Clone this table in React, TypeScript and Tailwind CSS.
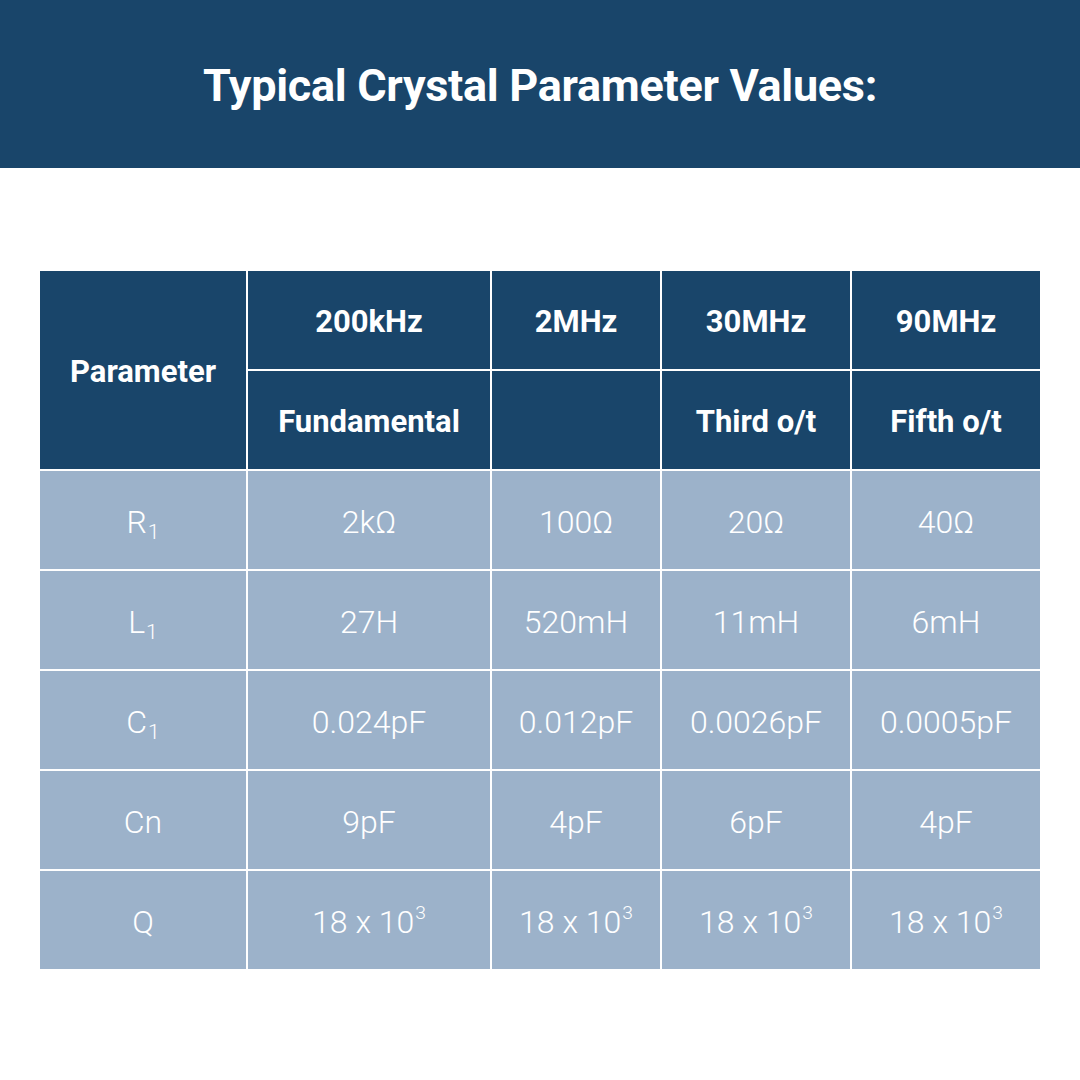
import React from 'react';

const freqs = ['200kHz', '2MHz', '30MHz', '90MHz'];
const modes = ['Fundamental', '', 'Third o/t', 'Fifth o/t'];

type Row = { label: React.ReactNode; values: React.ReactNode[] };

const Sub = ({ base, sub }: { base: string; sub: string }) => (
  <span>
    {base}
    <span className="relative top-[0.3em] text-[0.66em] ml-[1px]">{sub}</span>
  </span>
);

const Pow = () => (
  <span>
    18 x 10<span className="relative top-[-0.75em] text-[0.6em] ml-[1px]">3</span>
  </span>
);

const rows: Row[] = [
  { label: <Sub base="R" sub="1" />, values: ['2kΩ', '100Ω', '20Ω', '40Ω'] },
  { label: <Sub base="L" sub="1" />, values: ['27H', '520mH', '11mH', '6mH'] },
  { label: <Sub base="C" sub="1" />, values: ['0.024pF', '0.012pF', '0.0026pF', '0.0005pF'] },
  { label: 'Cn', values: ['9pF', '4pF', '6pF', '4pF'] },
  { label: 'Q', values: [<Pow />, <Pow />, <Pow />, <Pow />] },
];

export default function App() {
  return (
    <div className="w-[1080px] h-[1080px] bg-white font-['Roboto',sans-serif] text-white">
      {/* Title bar */}
      <div className="h-[168px] bg-[#19456a] flex items-center justify-center">
        <h1 className="text-[45px] font-bold tracking-[-0.3px] pt-1">Typical Crystal Parameter Values:</h1>
      </div>

      {/* Table */}
      <div className="px-10 pt-[103px]">
        <div className="grid grid-cols-[206px_242px_168px_188px_188px] grid-rows-[repeat(7,98px)] gap-[2px] bg-white">
          <div className="row-span-2 bg-[#19456a] flex items-center justify-center text-[31px] font-bold pt-1">
            Parameter
          </div>
          {freqs.map((f) => (
            <div key={f} className="bg-[#19456a] flex items-center justify-center text-[31px] font-bold pt-1">
              {f}
            </div>
          ))}
          {modes.map((m, i) => (
            <div key={i} className="bg-[#19456a] flex items-center justify-center text-[31px] font-bold pt-1">
              {m}
            </div>
          ))}
          {rows.map((r, i) => (
            <React.Fragment key={i}>
              <div className="bg-[#9cb2ca] flex items-center justify-center text-[32px] font-light pt-1">
                {r.label}
              </div>
              {r.values.map((v, j) => (
                <div key={j} className="bg-[#9cb2ca] flex items-center justify-center text-[32px] font-light pt-1">
                  {v}
                </div>
              ))}
            </React.Fragment>
          ))}
        </div>
      </div>
    </div>
  );
}
